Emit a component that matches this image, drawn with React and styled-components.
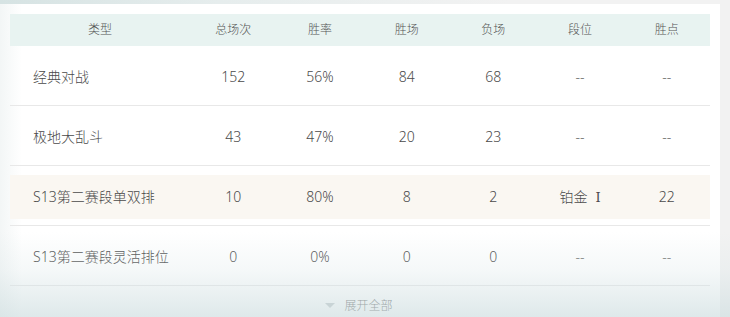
import React from 'react'
import styled, { createGlobalStyle } from 'styled-components'

const Global = createGlobalStyle`
  html, body { margin: 0; padding: 0; }
  body {
    background: #f2f2f2;
    font-family: "Noto Sans", "Noto Sans CJK SC", sans-serif;
  }
`

const rows = [
  { type: '经典对战', total: 152, rate: '56%', win: 84, lose: 68, tier: '--', lp: '--' },
  { type: '极地大乱斗', total: 43, rate: '47%', win: 20, lose: 23, tier: '--', lp: '--' },
  { type: 'S13第二赛段单双排', total: 10, rate: '80%', win: 8, lose: 2, tier: '铂金', div: 'Ⅰ', lp: 22, active: true },
  { type: 'S13第二赛段灵活排位', total: 0, rate: '0%', win: 0, lose: 0, tier: '--', lp: '--' },
]

const App = () => {
  return (
    <>
      <Global />
      <Page>
        <Card>
          <Head>
            <span>类型</span>
            <span>总场次</span>
            <span>胜率</span>
            <span>胜场</span>
            <span>负场</span>
            <span>段位</span>
            <span>胜点</span>
          </Head>
          {rows.map((r) => (
            <Row key={r.type}>
              <Cells $active={r.active}>
                <TypeCell>{r.type}</TypeCell>
                <Cell>{r.total}</Cell>
                <Cell>{r.rate}</Cell>
                <Cell>{r.win}</Cell>
                <Cell>{r.lose}</Cell>
                <Cell $dim={r.tier === '--'}>
                  {r.tier}
                  {r.div && <Numeral>{r.div}</Numeral>}
                </Cell>
                <Cell $dim={r.lp === '--'}>{r.lp}</Cell>
              </Cells>
            </Row>
          ))}
          <Footer>
            <Arrow />
            <span>展开全部</span>
          </Footer>
        </Card>
        <Fade />
      </Page>
    </>
  )
}

export default App

const Page = styled.div`
  position: relative;
  height: 317px;
  overflow: hidden;
  padding-top: 4px;
  box-sizing: border-box;
  background: linear-gradient(90deg, #d6e3e3 0%, #e6eded 30%, #f2f2f2 70%) top / 100% 4px no-repeat, #f2f2f2;
`

const Card = styled.div`
  width: 720px;
  height: 400px;
  box-sizing: border-box;
  padding: 10px 10px 0;
  background: linear-gradient(90deg, #f3f6f6 0px, #ffffff 22px);
`

const grid = `
  display: grid;
  grid-template-columns: 180px repeat(6, 1fr);
  align-items: center;
`

const Head = styled.div`
  ${grid}
  height: 32px;
  background: #e8f3f1;
  font-size: 12px;
  font-weight: 300;
  line-height: 1;
  color: #555;
  span { text-align: center; }
`

const Row = styled.div`
  padding: 9px 0 6px;
  border-bottom: 1px solid #e8e8e8;
`

const Cells = styled.div`
  ${grid}
  height: 44px;
  background: ${(p) => (p.$active ? '#faf7f2' : 'transparent')};
  font-size: 14px;
  font-weight: 300;
  line-height: 1;
  color: #4a4a4a;
`

const TypeCell = styled.span`
  padding-left: 23px;
  white-space: nowrap;
`

const Cell = styled.span`
  text-align: center;
  color: ${(p) => (p.$dim ? '#6a6a6a' : '#4a4a4a')};
`

const Numeral = styled.span`
  margin-left: 8px;
  font-family: "DejaVu Serif", "Liberation Serif", serif;
  font-size: 13px;
`

const Footer = styled.div`
  height: 38px;
  display: flex;
  align-items: center;
  justify-content: center;
  gap: 9px;
  font-size: 12px;
  font-weight: 300;
  color: #666;
  padding-right: 2px;
`

const Arrow = styled.i`
  width: 0;
  height: 0;
  border-left: 5px solid transparent;
  border-right: 5px solid transparent;
  border-top: 5px solid #c2c8ca;
`

const Fade = styled.div`
  position: absolute;
  left: 0;
  right: 0;
  bottom: 0;
  height: 85px;
  pointer-events: none;
  background: linear-gradient(180deg, rgba(215, 228, 230, 0) 0%, rgba(215, 228, 230, 0.25) 45%, rgba(205, 221, 223, 0.65) 100%);
`
